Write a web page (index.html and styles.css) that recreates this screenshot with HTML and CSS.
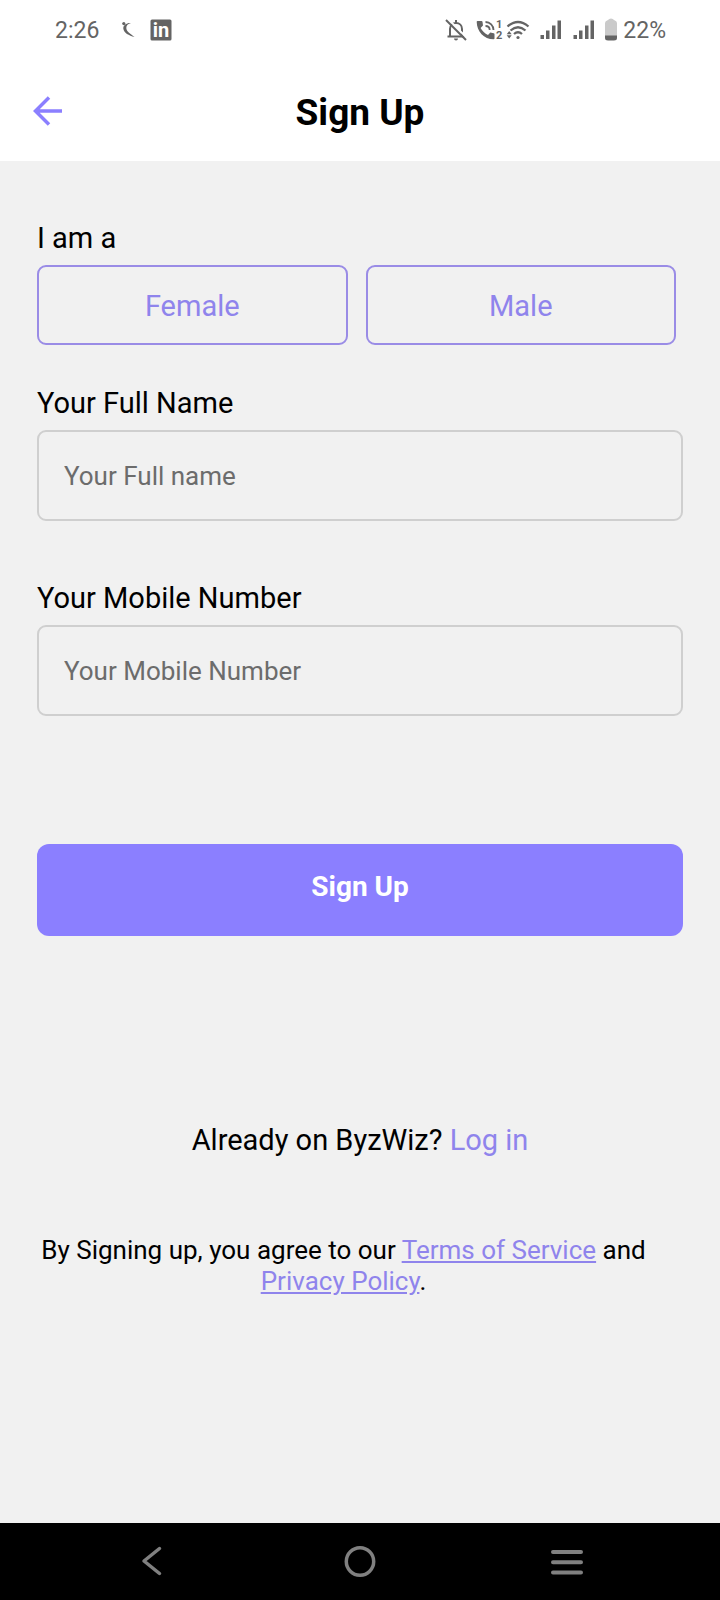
FILE: index.html
```html
<!DOCTYPE html>
<html lang="en">
<head>
<meta charset="utf-8">
<meta name="viewport" content="width=device-width, initial-scale=1">
<title>Sign Up</title>
<link rel="stylesheet" href="styles.css">
</head>
<body class="screen">
  <div class="status">
    <div class="status-left">
      <span>2:26</span>
      <svg class="status-moon" width="14" height="20" viewBox="0 0 14 20" aria-hidden="true">
        <circle cx="2.8" cy="3.6" r="1.6" fill="#646464"/>
        <path d="M10 3C6 2.500 2 5 2.300 8.500C2.700 13 8 15.500 13.500 17C9 13.500 5.500 11.500 5.300 8C5.200 5.500 7 3.500 10 3Z" fill="#646464"/>
      </svg>
      <svg width="22" height="22" viewBox="0 0 22 22" role="img" aria-label="LinkedIn">
        <rect x="0.500" y="0.500" width="21" height="21" rx="1.500" fill="#646464"/>
        <text class="logo-text" x="11" y="18" text-anchor="middle">in</text>
      </svg>
    </div>
    <div class="status-right">
      <svg width="22" height="22" viewBox="0 0 22 22" fill="none" stroke="#646464" stroke-width="2" aria-hidden="true">
        <path d="M5 17.500V10C5 6.500 7.500 4 11 4C14.500 4 17 6.500 17 10V17.500M2.500 17.500H19.500M11 1V4"/>
        <path d="M9 19.500A2 2 0 0 0 13 19.500Z" fill="#646464" stroke="none"/>
        <path d="M3.500 0.500L22.500 19.500" stroke="#fff"/>
        <path d="M1 1L21 21"/>
      </svg>
      <svg class="status-call" width="27" height="22" viewBox="0 0 27 22" aria-hidden="true">
        <path d="M1.500 2H5.500C6 2 6.400 2.300 6.500 2.800L7 6.500L4.600 9C6 11.800 9 14.800 12 16L14.300 13.600L17.700 14.300C18.200 14.400 18.500 14.800 18.500 15.300V19.500C18.500 20 18.100 20.300 17.600 20.300C8 20.300 0.700 12.500 0.700 2.800C0.700 2.300 1 2 1.500 2Z" fill="#646464"/>
        <path d="M9.500 3C14 3 17.500 6.500 17.500 11M9.500 7C12 7 13.700 8.700 13.700 11" fill="none" stroke="#646464" stroke-width="1.800"/>
        <text class="sim-text" x="20" y="9">1</text>
        <text class="sim-text" x="20" y="20">2</text>
      </svg>
      <svg class="status-wifi" width="24" height="22" viewBox="0 0 24 22" fill="none" stroke="#646464" stroke-width="2.300" aria-hidden="true">
        <path d="M1.500 7.500Q12 -1.500 22.500 7.500M4.500 11.500Q12 5 19.500 11.500M8 15Q12 11.500 16 15"/>
        <circle cx="12" cy="18.500" r="1.600" fill="#646464" stroke="none"/>
        <path d="M3.200 12L5.700 15.200H0.700ZM3.200 19.500L5.700 16.300H0.700Z" fill="#646464" stroke="none"/>
      </svg>
      <svg class="status-signal" width="22" height="22" viewBox="0 0 22 22" fill="#646464" aria-hidden="true">
        <path d="M0.500 16h3.500v4H0.500zM6 11.500h3.500v8.500H6zM12 6.500h3.500v13.500H12zM17.500 1.500h3.500v18.500h-3.500z"/>
      </svg>
      <svg class="status-signal" width="22" height="22" viewBox="0 0 22 22" fill="#646464" aria-hidden="true">
        <path d="M0.500 16h3.500v4H0.500zM6 11.500h3.500v8.500H6zM12 6.500h3.500v13.500H12zM17.500 1.500h3.500v18.500h-3.500z"/>
      </svg>
      <svg class="status-battery" width="12" height="24" viewBox="0 0 12 24" aria-hidden="true">
        <path d="M0 18V5Q0 3 3 2Q4 0.500 6 0.500Q8 0.500 9 2Q12 3 12 5V18Z" fill="#cacaca"/>
        <path d="M0 17.500H12V20Q12 22.500 9 22.500H3Q0 22.500 0 20Z" fill="#646464"/>
      </svg>
      <span>22%</span>
    </div>
  </div>

  <header class="header">
    <button class="back" type="button" aria-label="Back">
      <svg width="30" height="30" viewBox="0 0 30 30" fill="none" stroke="#8b7fff" stroke-width="3.500" aria-hidden="true">
        <path d="M29 15H3M16 1.500L2.500 15L16 28.500"/>
      </svg>
    </button>
    <h1 class="title">Sign Up</h1>
  </header>

  <main class="main">
    <form class="form">
      <div class="field" role="group" aria-labelledby="gender">
        <span class="label" id="gender">I am a</span>
        <div class="choices">
          <button class="choice" type="button">Female</button>
          <button class="choice" type="button">Male</button>
        </div>
      </div>
      <div class="field field-name">
        <label class="label" for="name">Your Full Name</label>
        <input class="input" id="name" type="text" placeholder="Your Full name">
      </div>
      <div class="field field-mobile">
        <label class="label" for="mobile">Your Mobile Number</label>
        <input class="input" id="mobile" type="tel" placeholder="Your Mobile Number">
      </div>
      <button class="submit" type="submit">Sign Up</button>
    </form>
    <p class="login">Already on ByzWiz? <a class="link" href="#login">Log in</a></p>
    <p class="terms">By Signing up, you agree to our <a class="link underlined" href="#terms">Terms of Service</a> and <a class="link underlined" href="#privacy">Privacy Policy</a>.</p>
  </main>

  <nav class="nav" aria-label="System">
    <button class="nav-button" type="button" aria-label="Back">
      <svg width="34" height="34" viewBox="0 0 34 34" fill="none" stroke="#808080" stroke-width="3.500" stroke-linecap="round" stroke-linejoin="round" aria-hidden="true"><path d="M23.500 3.500L8 16L23.500 28.500"/></svg>
    </button>
    <button class="nav-button" type="button" aria-label="Home">
      <svg width="34" height="34" viewBox="0 0 34 34" fill="none" stroke="#808080" stroke-width="3.500" aria-hidden="true"><circle cx="17" cy="16.500" r="13.700"/></svg>
    </button>
    <button class="nav-button" type="button" aria-label="Recent apps">
      <svg width="34" height="34" viewBox="0 0 34 34" fill="none" stroke="#808080" stroke-width="4" stroke-linecap="round" aria-hidden="true"><path d="M3 7H31M3 17.200H31M3 27.500H31"/></svg>
    </button>
  </nav>
</body>
</html>
```
FILE: styles.css
```css
* {
  box-sizing: border-box;
}

.screen {
  display: flex;
  flex-direction: column;
  min-height: 100vh;
  margin: 0;
  background: #f1f1f1;
  color: #000;
  font-family: Roboto, sans-serif;
  font-size: 29px;
  line-height: 34px;
}

button,
input {
  font: inherit;
}

.status {
  display: flex;
  justify-content: space-between;
  align-items: center;
  height: 60px;
  padding: 0 54px 0 55px;
  background: #fff;
  color: #646464;
  font-size: 23px;
  line-height: 36px;
}

.status span {
  padding-top: 2px;
}

.status-left,
.status-right {
  display: flex;
  align-items: center;
}

.status-left {
  gap: 15px;
}

.status-moon {
  margin-left: 7px;
}

.logo-text {
  fill: #fff;
  font-size: 20px;
  font-weight: 700;
}

.sim-text {
  fill: #646464;
  font-size: 11px;
  font-weight: 700;
}

.status-call {
  margin-left: 9px;
}

.status-wifi {
  margin-left: 3px;
}

.status-signal {
  margin-left: 11px;
}

.status-wifi + .status-signal {
  margin-left: 10px;
}

.status-battery {
  margin: 0 6px 0 10px;
}

.header {
  display: grid;
  grid-template-columns: 48px 1fr 48px;
  align-items: center;
  height: 101px;
  padding: 0 24px;
  background: #fff;
}

.back {
  display: flex;
  padding: 9px;
  border: 0;
  background: none;
}

.title {
  margin: 0;
  padding-top: 4px;
  font-size: 37px;
  line-height: 44px;
  text-align: center;
}

.main {
  flex: 1;
  padding: 60px 37px;
}

.form,
.field {
  display: flex;
  flex-direction: column;
}

.field {
  gap: 10px;
}

.field-name {
  margin-top: 41px;
}

.field-mobile {
  margin-top: 60px;
}

.choices {
  display: flex;
  gap: 18px;
  padding-right: 7px;
}

.choice {
  flex: 1;
  height: 80px;
  padding: 2px 0 0;
  border: 2px solid #9a8ce6;
  border-radius: 9px;
  background: none;
  color: #8f84ec;
}

.input {
  width: 100%;
  height: 91px;
  padding: 0 25px;
  border: 2px solid #cfcfcf;
  border-radius: 9px;
  background: none;
  font-size: 26px;
}

.input::placeholder {
  color: #6c6c6c;
}

.submit {
  height: 92px;
  margin-top: 128px;
  padding: 0 0 6px;
  border: 0;
  border-radius: 12px;
  background: #8b7fff;
  color: #fff;
  font-size: 28px;
  font-weight: 700;
}

.login {
  margin: 187px 0 0;
  text-align: center;
}

.terms {
  margin: 78px 0 0;
  padding-right: 33px;
  font-size: 26px;
  line-height: 31px;
  text-align: center;
}

.link {
  color: #8f84ec;
  text-decoration: none;
}

.underlined {
  text-decoration: underline;
}

.nav {
  display: flex;
  justify-content: space-between;
  height: 77px;
  padding: 0 136px;
  background: #000;
}

.nav-button {
  display: flex;
  align-items: center;
  padding: 0;
  border: 0;
  background: none;
}
```
